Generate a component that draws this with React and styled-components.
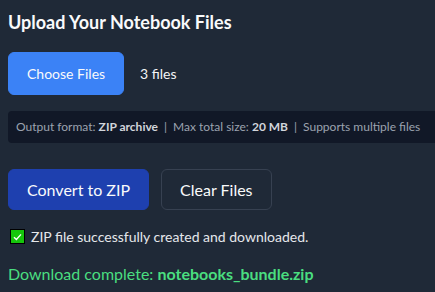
import styled, { createGlobalStyle } from 'styled-components'

const Global = createGlobalStyle`
    html, body {
        margin: 0;
        background: #1f2937;
    }
    body {
        font-family: Lato, "Noto Sans", sans-serif;
        color: #f3f4f6;
    }
`

const Page = styled.div`
    padding: 8px;
    width: 435px;
    box-sizing: border-box;
`
const Title = styled.h2`
    font-size: 18px;
    font-weight: 700;
    margin: 2px 0 18px;
    line-height: 24px;
    color: #f9fafb;
`
const Row = styled.div`
    display: flex;
    align-items: center;
    gap: ${props => props.gap || 12}px;
`
const Button = styled.button`
    font-family: inherit;
    font-size: ${props => props.size || 15}px;
    height: ${props => props.h || 41}px;
    padding: 0 ${props => props.px || 20}px;
    border-radius: 6px;
    cursor: pointer;
    color: #f9fafb;
    background: ${props => props.bg || 'transparent'};
    border: 1px solid ${props => props.border || props.bg || 'transparent'};
`
const Count = styled.span`
    font-size: 14px;
    color: #f3f4f6;
`
const Info = styled.div`
    margin-top: 16px;
    background: #111827;
    border-radius: 4px;
    padding: 8px 8px;
    font-size: 12px;
    color: #9ca3af;
    white-space: nowrap;
    width: 460px;
    line-height: 16px;
    b {
        color: #d1d5db;
    }
`
const Sep = styled.span`
    margin: 0 6px;
`
const Actions = styled(Row)`
    margin-top: 26px;
`
const Status = styled.div`
    margin-top: 18px;
    display: flex;
    align-items: center;
    gap: 6px;
    font-size: 14px;
    color: #e5e7eb;
`
const Check = styled.span`
    width: 13px;
    height: 13px;
    background: #16c60c;
    border: 1px solid #000;
    display: inline-flex;
    align-items: center;
    justify-content: center;
    margin-left: 2px;
`
const Done = styled.div`
    margin-top: 19px;
    font-size: 16px;
    color: #4ade80;
    b {
        font-weight: 700;
    }
`

export default function App() {
    return (
        <Page>
            <Global />
            <Title>Upload Your Notebook Files</Title>
            <Row gap={16}>
                <Button bg="#3b82f6" h={43} px={18} size={14}>Choose Files</Button>
                <Count>3 files</Count>
            </Row>
            <Info>
                Output format: <b>ZIP archive</b><Sep>|</Sep>Max total size: <b>20 MB</b><Sep>|</Sep>Supports multiple files
            </Info>
            <Actions>
                <Button bg="#1e40af" size={16} px={18}>Convert to ZIP</Button>
                <Button border="#374151" size={16} px={18}>Clear Files</Button>
            </Actions>
            <Status>
                <Check>
                    <svg width="9" height="8" viewBox="0 0 9 8">
                        <path d="M1 4.2 L3.4 6.4 L8 1.4" fill="none" stroke="#fff" strokeWidth="1.4" />
                    </svg>
                </Check>
                ZIP file successfully created and downloaded.
            </Status>
            <Done>Download complete: <b>notebooks_bundle.zip</b></Done>
        </Page>
    )
}
